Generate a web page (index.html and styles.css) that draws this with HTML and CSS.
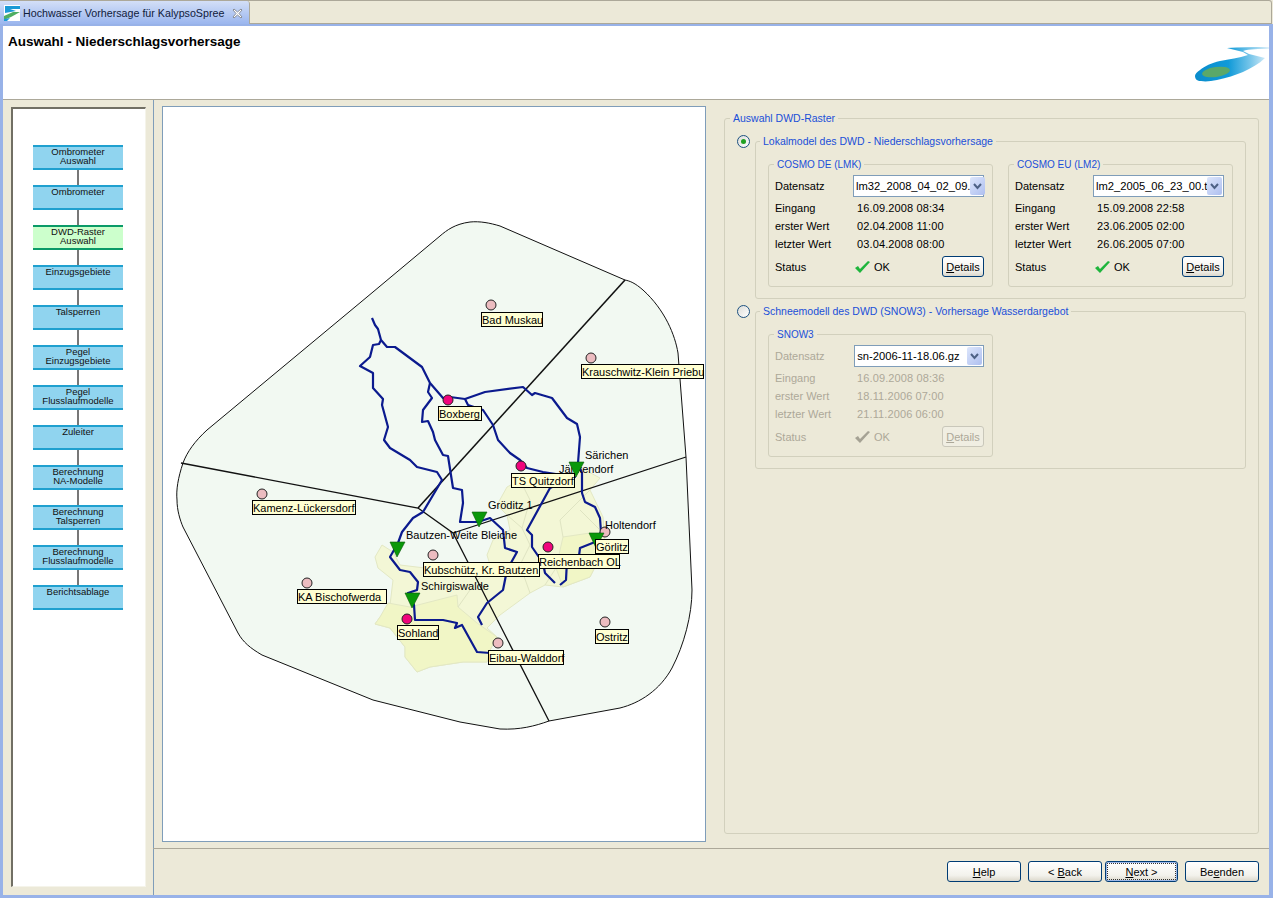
FILE: index.html
```html
<!DOCTYPE html>
<html>
<head>
  <meta charset="utf-8">
  <title>Hochwasser Vorhersage für KalypsoSpree</title>
  <link rel="stylesheet" href="styles.css">
</head>
<body>
<div class="tabbar">
  <div class="tab">
    <svg class="tab-icon" width="16" height="16" viewBox="0 0 16 16">
      <rect width="16" height="16" fill="#ffffff"/>
      <path d="M1 1 L16 1 L16 4 L6 4 L12 6 L1 8 Z" fill="#1b9ad6"/>
      <path d="M0 11 L9 7 L16 7 L7 12 L0 15 Z" fill="#4fae62"/>
      <path d="M0 14 L6 13 L3 16 L0 16 Z" fill="#1b9ad6"/>
    </svg>
    <span class="tab-title">Hochwasser Vorhersage für KalypsoSpree</span>
    <svg class="tab-close" width="11" height="11" viewBox="0 0 11 11">
      <path d="M2 1 L5.5 4 L9 1 L10 2 L7 5.5 L10 9 L9 10 L5.5 7 L2 10 L1 9 L4 5.5 L1 2 Z" fill="#ffffff" stroke="#8a8f99"/>
    </svg>
  </div>
</div>

<div class="window">
  <div class="header">
    <h1>Auswahl - Niederschlagsvorhersage</h1>
    <svg class="logo" width="76" height="38" viewBox="0 0 76 38">
      <defs>
        <linearGradient id="swoosh" x1="0" x2="1" y1="0" y2="0">
          <stop offset="0" stop-color="#0a8ccc"/>
          <stop offset="0.45" stop-color="#109ad8"/>
          <stop offset="0.75" stop-color="#78c6ea"/>
          <stop offset="1" stop-color="#e4f2fa"/>
        </linearGradient>
      </defs>
      <path d="M34 2 C46 1 60 1 76 1 L76 3 C66 3 56 3 50 5 L56 8 L72 12 C66 18 58 22 50 26 C42 29 34 32 24 34 C18 35 13 36 8 35 C4 35 2 33 2 30 C2 28 4 26 7 24 C12 20 18 17 27 15 C36 13 46 12 55 9 L50 6 Z" fill="url(#swoosh)"/>
      <ellipse cx="23" cy="26" rx="14" ry="5" transform="rotate(-8 23 26)" fill="#5aa86a"/>
    </svg>
  </div>

  <div class="body">
    <div class="steps-panel">
      <div class="steps">
        <div class="step">Ombrometer<br>Auswahl</div>
        <div class="link"></div>
        <div class="step">Ombrometer</div>
        <div class="link"></div>
        <div class="step active">DWD-Raster<br>Auswahl</div>
        <div class="link"></div>
        <div class="step">Einzugsgebiete</div>
        <div class="link"></div>
        <div class="step">Talsperren</div>
        <div class="link"></div>
        <div class="step">Pegel<br>Einzugsgebiete</div>
        <div class="link"></div>
        <div class="step">Pegel<br>Flusslaufmodelle</div>
        <div class="link"></div>
        <div class="step">Zuleiter</div>
        <div class="link"></div>
        <div class="step">Berechnung<br>NA-Modelle</div>
        <div class="link"></div>
        <div class="step">Berechnung<br>Talsperren</div>
        <div class="link"></div>
        <div class="step">Berechnung<br>Flusslaufmodelle</div>
        <div class="link"></div>
        <div class="step">Berichtsablage</div>
      </div>
    </div>

    <div class="main">
      <div class="content">
        <div class="map-box">
          <svg class="map" width="542" height="734" viewBox="163 107 542 734">
            <!-- Aussengrenze -->
            <path class="area" d="M470 222 C455 224 447 230 440 236 L367 297 L207 430 C195 441 187 452 183 463 C178 478 176 490 177 500 C177 510 180 520 183 527 L238 633 C243 642 250 648 262 655 L373 700 L460 722 L500 729 C520 730 535 726 549 721 L620 708 C640 703 660 690 672 668 C684 645 692 615 692 590 L686 457 L678 353 C675 335 665 310 643 290 C635 283 630 281 625 280 L500 226 C490 223 480 221 470 222 Z"/>
            <!-- Einzugsgebiete -->
            <path class="catch" d="M382 545 L375 557 L378 568 L393 580 L390 605 L380 617 L375 624 L390 628 L405 647 L405 657 L417 672 L430 667 L463 662 L487 662 L490 650 L497 637 L487 628 L500 615 L530 593 L545 585 L563 587 L590 577 L597 563 L605 545 L603 517 L590 490 L600 478 L585 470 L550 478 L520 480 L507 487 L497 505 L507 515 L510 530 L493 540 L487 555 L490 565 L425 568 L400 565 L393 552 Z"/>
            <path class="catch-dark" d="M388 603 L410 607 L457 595 L458 607 L477 623 L497 637 L490 650 L487 662 L463 662 L430 667 L417 672 L405 657 L405 647 L390 628 L375 624 L380 617 Z"/>
            <path class="catch-dark" d="M563 537 L590 533 L605 545 L597 563 L590 577 L563 587 L556 568 Z"/>
            <path class="catch-line" d="M507 515 L522 528 L530 545 L520 565 L530 593 M458 607 L470 590 L490 565 M563 537 L560 520 L575 505 L590 490 M600 530 L580 510 M556 568 L545 585 M520 480 L530 500 L522 528"/>
            <!-- Grenzen -->
            <path class="border-line thick" d="M625 280 L418 508"/>
            <path class="border-line" d="M181 463 L418 508 L453 533 L477 580 L549 721 M686 457 L453 533"/>
            <!-- Gewaesser -->
            <path class="river" d="M372 318 L375 325 L378 329 L381 340 L387 347 L395 347 L422 367 L430 383 L443 398 L450 397 L465 399 L485 392 L523 387 L532 395 L535 393 L552 398 L567 418 L577 424 L580 437 L578 463 L582 473 L582 493 L585 502 L595 507 L600 518 L601 532 L595 542 L580 548 L579 556 L567 560 L566 580 L560 585"/>
            <path class="river" d="M465 399 L468 405 L483 410 L493 425 L498 440 L510 453 L520 460 L527 468 L543 472 L575 477 L550 488 L527 530 L532 535 L532 547 L543 563 L545 573 L555 583"/>
            <path class="river" d="M381 340 L379 344 L373 345 L370 357 L360 366 L373 373 L373 388 L383 399 L382 405 L388 427 L384 440 L390 448 L410 460 L417 467 L437 472 L442 480 L423 512 L413 518 L402 532 L398 543 L390 557 L400 570 L410 572 L418 582 L417 590 L408 593 L414 605 L415 620 L443 620 L457 623 L455 628 L462 625 L477 652 L490 653"/>
            <path class="river" d="M430 383 L428 392 L432 398 L423 410 L422 422 L428 421 L433 432 L435 440 L443 455 L448 456 L453 488 L462 490 L463 503 L460 522 L478 522 L490 518 L503 530 L505 548 L517 552 L507 570 L503 590 L487 603 L478 617 L482 625"/>
            <!-- Stationen -->
            <circle class="st-pale" cx="491" cy="305" r="5"/>
            <circle class="st-pale" cx="591" cy="358" r="5"/>
            <circle class="st-pale" cx="262" cy="494" r="5"/>
            <circle class="st-pale" cx="307" cy="583" r="5"/>
            <circle class="st-pale" cx="433" cy="555" r="5"/>
            <circle class="st-pale" cx="605" cy="532" r="5"/>
            <circle class="st-pale" cx="605" cy="622" r="5"/>
            <circle class="st-pale" cx="498" cy="643" r="5"/>
            <circle class="st-pink" cx="448" cy="400" r="5"/>
            <circle class="st-pink" cx="521" cy="466" r="5"/>
            <circle class="st-pink" cx="548" cy="547" r="5"/>
            <circle class="st-pink" cx="407" cy="619" r="5"/>
            <!-- Pegelnamen -->
            <text x="585" y="459">Särichen</text>
            <text x="559" y="473">Jänkendorf</text>
            <text x="488" y="509">Gröditz 1</text>
            <text x="605" y="529">Holtendorf</text>
            <text x="406" y="539">Bautzen-Weite Bleiche</text>
            <text x="421" y="590">Schirgiswalde</text>
            <!-- Pegel -->
            <path class="gauge" d="M569 462 L584 462 L576 477 Z"/>
            <path class="gauge" d="M472 512 L487 512 L479 527 Z"/>
            <path class="gauge" d="M390 542 L405 542 L397 557 Z"/>
            <path class="gauge" d="M405 593 L420 593 L412 608 Z"/>
            <path class="gauge" d="M589 533 L604 533 L596 548 Z"/>
            <!-- Beschriftung -->
            <g class="label"><rect x="481.5" y="312.5" width="61" height="14"/><text x="482" y="324">Bad Muskau</text></g>
            <g class="label"><rect x="581.5" y="364.5" width="122" height="14"/><text x="582" y="376">Krauschwitz-Klein Priebu</text></g>
            <g class="label"><rect x="438.5" y="406.5" width="43" height="14"/><text x="439" y="418">Boxberg</text></g>
            <g class="label"><rect x="511.5" y="473.5" width="63" height="14"/><text x="512" y="485">TS Quitzdorf</text></g>
            <g class="label"><rect x="252.5" y="500.5" width="103" height="14"/><text x="253" y="512">Kamenz-Lückersdorf</text></g>
            <g class="label"><rect x="595.5" y="539.5" width="33" height="14"/><text x="596" y="551">Görlitz</text></g>
            <g class="label"><rect x="538.5" y="554.5" width="81" height="14"/><text x="539" y="566">Reichenbach OL</text></g>
            <g class="label"><rect x="423.5" y="562.5" width="116" height="14"/><text x="424" y="574">Kubschütz, Kr. Bautzen</text></g>
            <g class="label"><rect x="297.5" y="589.5" width="89" height="14"/><text x="298" y="601">KA Bischofwerda</text></g>
            <g class="label"><rect x="397.5" y="625.5" width="41" height="14"/><text x="398" y="637">Sohland</text></g>
            <g class="label"><rect x="488.5" y="650.5" width="75" height="14"/><text x="489" y="662">Eibau-Walddorf</text></g>
            <g class="label"><rect x="595.5" y="629.5" width="33" height="14"/><text x="596" y="641">Ostritz</text></g>
          </svg>
        </div>

        <div class="settings">
          <fieldset class="group outer">
            <legend>Auswahl DWD-Raster</legend>

            <div class="option">
              <span class="radio checked"></span>
              <fieldset class="group model">
                <legend>Lokalmodel des DWD - Niederschlagsvorhersage</legend>

                <fieldset class="group source">
                  <legend>COSMO DE (LMK)</legend>
                  <div class="row-select">
                    <span>Datensatz</span>
                    <div class="combo"><span class="combo-text">lm32_2008_04_02_09.</span><span class="combo-btn"><svg width="9" height="7" viewBox="0 0 9 7"><path d="M1 1 L4.5 5 L8 1" fill="none" stroke="#4d6185" stroke-width="2"/></svg></span></div>
                  </div>
                  <div class="row"><span>Eingang</span><span class="val">16.09.2008 08:34</span></div>
                  <div class="row"><span>erster Wert</span><span class="val">02.04.2008 11:00</span></div>
                  <div class="row"><span>letzter Wert</span><span class="val">03.04.2008 08:00</span></div>
                  <div class="row-status">
                    <span>Status</span>
                    <span class="state"><svg width="15" height="12" viewBox="0 0 15 12"><path d="M0 7 L3 5 L5 8 L13 0 L15 1 L5 12 Z" fill="#1fb53c"/></svg>OK</span>
                    <button class="btn small"><u>D</u>etails</button>
                  </div>
                </fieldset>

                <fieldset class="group source">
                  <legend>COSMO EU (LM2)</legend>
                  <div class="row-select">
                    <span>Datensatz</span>
                    <div class="combo"><span class="combo-text">lm2_2005_06_23_00.t</span><span class="combo-btn"><svg width="9" height="7" viewBox="0 0 9 7"><path d="M1 1 L4.5 5 L8 1" fill="none" stroke="#4d6185" stroke-width="2"/></svg></span></div>
                  </div>
                  <div class="row"><span>Eingang</span><span class="val">15.09.2008 22:58</span></div>
                  <div class="row"><span>erster Wert</span><span class="val">23.06.2005 02:00</span></div>
                  <div class="row"><span>letzter Wert</span><span class="val">26.06.2005 07:00</span></div>
                  <div class="row-status">
                    <span>Status</span>
                    <span class="state"><svg width="15" height="12" viewBox="0 0 15 12"><path d="M0 7 L3 5 L5 8 L13 0 L15 1 L5 12 Z" fill="#1fb53c"/></svg>OK</span>
                    <button class="btn small"><u>D</u>etails</button>
                  </div>
                </fieldset>
              </fieldset>
            </div>

            <div class="option">
              <span class="radio"></span>
              <fieldset class="group model">
                <legend>Schneemodell des DWD (SNOW3) - Vorhersage Wasserdargebot</legend>

                <fieldset class="group source disabled">
                  <legend>SNOW3</legend>
                  <div class="row-select">
                    <span>Datensatz</span>
                    <div class="combo"><span class="combo-text">sn-2006-11-18.06.gz</span><span class="combo-btn"><svg width="9" height="7" viewBox="0 0 9 7"><path d="M1 1 L4.5 5 L8 1" fill="none" stroke="#4d6185" stroke-width="2"/></svg></span></div>
                  </div>
                  <div class="row"><span>Eingang</span><span class="val">16.09.2008 08:36</span></div>
                  <div class="row"><span>erster Wert</span><span class="val">18.11.2006 07:00</span></div>
                  <div class="row"><span>letzter Wert</span><span class="val">21.11.2006 06:00</span></div>
                  <div class="row-status">
                    <span>Status</span>
                    <span class="state"><svg width="15" height="12" viewBox="0 0 15 12"><path d="M0 7 L3 5 L5 8 L13 0 L15 1 L5 12 Z" fill="#a5a294"/></svg>OK</span>
                    <button class="btn small"><u>D</u>etails</button>
                  </div>
                </fieldset>
              </fieldset>
            </div>
          </fieldset>
        </div>
      </div>

      <div class="buttons">
        <button class="btn"><u>H</u>elp</button>
        <div class="nav-gap"></div>
        <button class="btn">&lt; <u>B</u>ack</button>
        <button class="btn focus"><u>N</u>ext &gt;</button>
        <div class="nav-gap"></div>
        <button class="btn">Be<u>e</u>nden</button>
      </div>
    </div>
  </div>
</div>
</body>
</html>
```

FILE: styles.css
```css
html, body {
  margin: 0;
  padding: 0;
}

body {
  width: 1273px;
  height: 898px;
  overflow: hidden;
  background: #ece9d8;
  font-family: "Liberation Sans", Arial, sans-serif;
  font-size: 11px;
  color: #000;
}

/* tab oben */
.tabbar {
  height: 24px;
  box-sizing: border-box;
  border-top: 1px solid #aca899;
  border-bottom: 1px solid #aca899;
  border-right: 1px solid #aca899;
  border-top-right-radius: 3px;
  margin-right: 1px;
}

.tab {
  width: 250px;
  height: 24px;
  box-sizing: border-box;
  display: flex;
  align-items: center;
  padding-left: 4px;
  gap: 3px;
  color: #10203c;
  border-right: 1px solid #aca899;
  border-top-right-radius: 3px;
  background: linear-gradient(#d3dff7, #98b4ee);
}

.tab-title {
  font-size: 10.7px;
  white-space: nowrap;
}

.tab-close {
  margin-left: 5px;
}

/* fenster */
.window {
  width: 1273px;
  height: 874px;
  box-sizing: border-box;
  border: 3px solid #98b2e8;
  border-top-width: 2px;
  border-bottom-width: 3px;
  border-right-width: 4px;
  display: flex;
  flex-direction: column;
}

.header {
  height: 74px;
  box-sizing: border-box;
  background: #fff;
  border-bottom: 1px solid #aca899;
  display: flex;
  justify-content: space-between;
  padding: 8px 0 0 5px;
  position: relative;
}

.header h1 {
  margin: 0;
  font-size: 13.5px;
  line-height: 15px;
  font-weight: bold;
}

.logo {
  position: absolute;
  right: 0;
  bottom: 15px;
}

.body {
  flex: 1;
  display: flex;
  min-height: 0;
}

/* schritte links */
.steps-panel {
  width: 151px;
  box-sizing: border-box;
  margin-top: -1px;
  border-top: 1px solid #7f9db9;
  border-right: 1px solid #7f9db9;
  padding: 7px 7px 8px 8px;
}

.steps {
  height: 100%;
  box-sizing: border-box;
  background: #fff;
  border-top: 2px solid #716f64;
  border-left: 2px solid #716f64;
  border-right: 1px solid #f5f4ea;
  border-bottom: 1px solid #f5f4ea;
  padding-top: 36px;
  padding-left: 20px;
}

.step {
  width: 90px;
  height: 25px;
  box-sizing: border-box;
  background: #90d4ef;
  border-top: 2px solid #1fa0cf;
  border-bottom: 2px solid #1fa0cf;
  text-align: center;
  font-size: 9.5px;
  line-height: 9px;
  color: #111;
}

.step.active {
  background: #ccffcc;
  border-color: #0a9a68;
}

.link {
  width: 2px;
  height: 15px;
  margin-left: 44px;
  background: #777;
}

.main {
  flex: 1;
  display: flex;
  flex-direction: column;
  min-width: 0;
}

.content {
  height: 748px;
  display: flex;
  box-sizing: border-box;
  padding: 6px 10px 6px 7px;
  margin-left: 1px;
}

/* karte */
.map-box {
  width: 544px;
  height: 736px;
  box-sizing: border-box;
  background: #fff;
  border: 1px solid #7f9db9;
}

.map {
  display: block;
}

.map text {
  font-family: "Liberation Sans", Arial, sans-serif;
  font-size: 11px;
  fill: #000;
}

.area {
  fill: #f2f9f2;
  stroke: #111;
  stroke-width: 1;
}

.catch {
  fill: #f3f7d6;
  stroke: #e3e8c4;
  stroke-width: 1;
}

.catch-dark {
  fill: #f1f6c6;
  stroke: #e3e8c4;
  stroke-width: 1;
}

.catch-line {
  fill: none;
  stroke: #dfe4c2;
  stroke-width: 1;
}

.border-line {
  fill: none;
  stroke: #111;
  stroke-width: 1.3;
}

.border-line.thick {
  stroke-width: 1.6;
}

.river {
  fill: none;
  stroke: #0b1a8e;
  stroke-width: 2.2;
  stroke-linejoin: round;
}

.st-pale {
  fill: #ecbcc0;
  stroke: #222;
}

.st-pink {
  fill: #f0057c;
  stroke: #222;
}

.gauge {
  fill: #0a980a;
  stroke: #0a5a0a;
  stroke-width: 0.6;
}

.label rect {
  fill: #ffffd2;
  stroke: #000;
  stroke-width: 1;
}

/* rechte seite */
.settings {
  flex: 1;
  display: flex;
  margin-left: 18px;
  margin-bottom: 8px;
  min-width: 0;
}

.group {
  margin: 0;
  border: 1px solid #d2d0bd;
  border-radius: 3px;
  min-width: 0;
}

.group legend {
  color: #1a4fd8;
  font-size: 10.5px;
  line-height: 13px;
  padding: 0 3px;
  white-space: nowrap;
}

.outer {
  flex: 1;
  box-sizing: border-box;
  margin-top: 6px;
  padding: 10px 12px 0 12px;
}

.outer > legend {
  margin-left: -7px;
}

.option {
  display: flex;
  align-items: flex-start;
  gap: 5px;
  margin-bottom: 6px;
}

.radio {
  flex: none;
  width: 13px;
  height: 13px;
  box-sizing: border-box;
  border: 1px solid #1c5180;
  border-radius: 50%;
  background: linear-gradient(135deg, #dcdcd7, #fff);
  display: flex;
  align-items: center;
  justify-content: center;
}

.radio.checked::after {
  content: "";
  width: 5px;
  height: 5px;
  border-radius: 50%;
  background: #21a121;
}

.model {
  flex: 1;
  box-sizing: border-box;
  display: flex;
  gap: 15px;
  padding: 10px 12px 11px 12px;
}

.model > legend {
  margin-left: -8px;
}

.source {
  width: 225px;
  box-sizing: border-box;
  padding: 4px 8px 9px 6px;
}

.source > legend {
  font-size: 10px;
  margin-left: -1px;
}

.row-select {
  display: flex;
  align-items: center;
  height: 22px;
  margin-bottom: 2px;
}

.row-select > span {
  width: 80px;
}

.row {
  display: flex;
  align-items: center;
  height: 18px;
}

.row > span:first-child {
  width: 79px;
}

.val {
  padding-left: 3px;
  letter-spacing: 0.12px;
}

.row-status {
  display: flex;
  align-items: center;
  height: 21px;
  margin-top: 3px;
}

.row-status > span:first-child {
  width: 80px;
}

.state {
  display: flex;
  align-items: center;
  gap: 4px;
}

.disabled .row,
.disabled .row-status,
.disabled .row-select > span {
  color: #aca899;
}

.combo {
  width: 131px;
  height: 22px;
  box-sizing: border-box;
  border: 1px solid #7f9db9;
  background: #fff;
  display: flex;
  align-items: center;
  padding: 1px;
  color: #000;
}

.combo-text {
  flex: 1;
  white-space: nowrap;
  padding-left: 1px;
  font-size: 11.2px;
}

.combo-btn {
  flex: none;
  width: 15px;
  height: 18px;
  border-radius: 2px;
  background: linear-gradient(135deg, #dde6fb, #aebff0);
  display: flex;
  align-items: center;
  justify-content: center;
}

.btn {
  width: 74px;
  height: 21px;
  padding: 0;
  box-sizing: border-box;
  border: 1px solid #003c74;
  border-radius: 3px;
  background: linear-gradient(#ffffff, #f3f2ec 70%, #dcd8cc);
  font-family: inherit;
  font-size: 11px;
  color: #000;
}

.btn.small {
  width: 42px;
  margin-left: auto;
}

.disabled .btn {
  border-color: #c9c7ba;
  color: #aca899;
  background: #f0eee2;
}

.btn.focus {
  width: 73px;
  box-shadow: inset 0 0 0 1px #9db8e8;
  outline: 1px dotted #333;
  outline-offset: -3px;
}

/* knopfleiste */
.buttons {
  flex: 1;
  display: flex;
  justify-content: flex-end;
  align-items: flex-start;
  gap: 3px;
  box-sizing: border-box;
  border-top: 1px solid #aca899;
  margin-left: -1px;
  padding: 12px 10px 0 0;
}

.nav-gap {
  width: 1px;
}
```
